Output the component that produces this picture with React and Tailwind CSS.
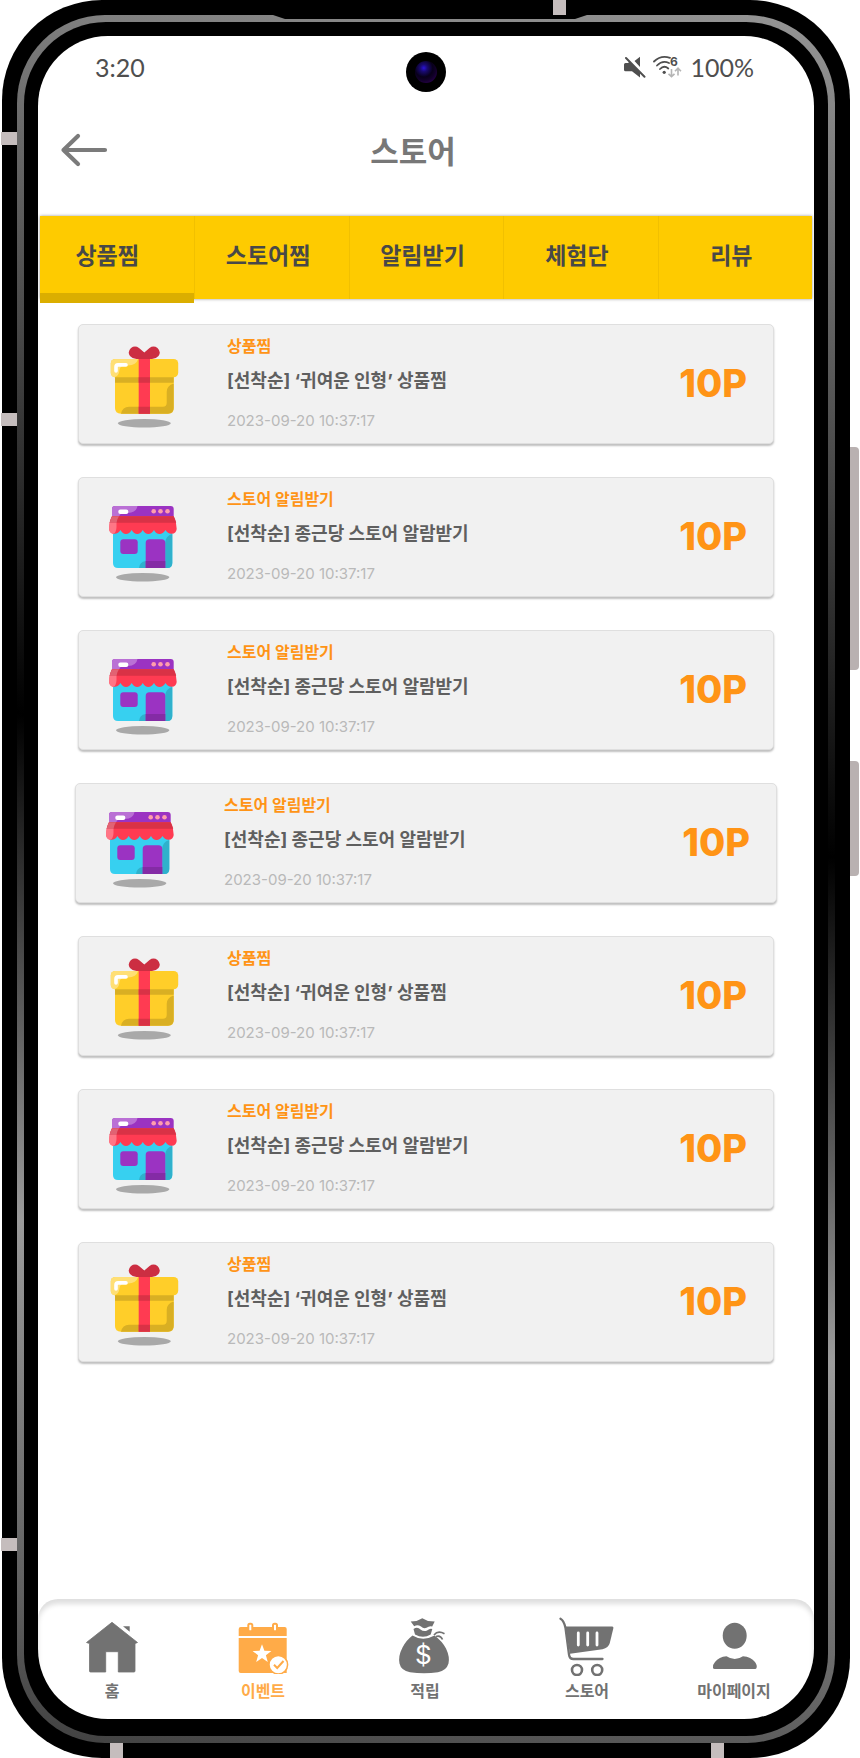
import React from "react";

const KR = "font-['Noto_Sans_CJK_KR',sans-serif]";

const TABS = ["상품찜", "스토어찜", "알림받기", "체험단", "리뷰"];

const GIFT = { kind: "gift", tag: "상품찜", title: "[선착순] ‘귀여운 인형’ 상품찜" };
const STORE = { kind: "store", tag: "스토어 알림받기", title: "[선착순] 종근당 스토어 알람받기" };

const ITEMS = [
  { id: 1, ...GIFT },
  { id: 2, ...STORE },
  { id: 3, ...STORE },
  { id: 4, ...STORE, wide: true },
  { id: 5, ...GIFT },
  { id: 6, ...STORE },
  { id: 7, ...GIFT },
];

function GiftIcon() {
  return (
    <svg viewBox="0 0 70 84" className="h-[84px] w-[70px]" aria-hidden="true">
      <ellipse cx="35.3" cy="77.3" rx="26.5" ry="4.3" fill="#a9a9a9" />
      <path d="M6 28H64.700V62Q64.700 67.700 59 67.700H12Q6 67.700 6 62Z" fill="#ffce29" />
      <path
        d="M6 31H64.700V36.700H6ZM64.700 37.500Q57.700 39.500 57.700 46V57Q57.700 60.700 54 60.700H20Q13.500 60.700 12 67.700H59Q64.700 67.700 64.700 62Z"
        fill="#d9af23"
      />
      <rect x="1.800" y="13" width="67.400" height="18.300" rx="4.500" fill="#ffce29" />
      <path d="M6.300 13H29Q27.500 19 19 19.500H15Q11 20 10.500 24Q10 30 5.500 31.300Q1.800 30.500 1.800 27V17.500Q1.800 13 6.300 13Z" fill="#ffdf75" />
      <path d="M7 25V21Q7 18.900 9 18.900H17" fill="none" stroke="#fff" strokeWidth="3.600" strokeLinecap="round" />
      <rect x="29.700" y="13" width="11.300" height="54.700" fill="#ff3b52" />
      <path d="M29.700 31.300H41V36.700H29.700ZM29.700 60.700H41V67.700H29.700Z" fill="#d93246" />
      <path
        d="M35.300 6.500L40.500 2Q44.500-.8 48.500 2Q52.500 6 49.500 10Q47.500 12.300 43 13H27.500Q23 12.300 21 10Q18 6 22 2Q26-.8 30 2Z"
        fill="#cc2e42"
      />
    </svg>
  );
}

function StoreIcon() {
  return (
    <svg viewBox="0 0 70 84" className="h-[84px] w-[70px]" aria-hidden="true">
      <ellipse cx="33.700" cy="78.300" rx="26.700" ry="4.300" fill="#a9a9a9" />
      <path d="M4 28H63.300V64Q63.300 69 58.300 69H9Q4 69 4 64Z" fill="#37d0f0" />
      <path d="M63.300 35Q56.300 37 56.300 44V69H58.300Q63.300 69 63.300 64ZM36.700 62Q30.500 63 30 69H37Z" fill="#2fb1cc" />
      <rect x="11.300" y="40.300" width="17.400" height="14.700" rx="3" fill="#9b33c2" />
      <path d="M36.700 69V44Q36.700 40.300 40.500 40.300H52.500Q56.300 40.300 56.300 44V69Z" fill="#9b33c2" />
      <path d="M36.700 62H56.300V69H36.700Z" fill="#842ba5" />
      <path d="M3 18V10Q3 7 6 7H61.700Q64.700 7 64.700 10V18Z" fill="#9b33c2" />
      <path d="M3 18V10Q3 7 6 7H28.500Q27.500 13.500 19 14H15Q11 14 10 18Z" fill="#ba70d5" />
      <rect x="9.300" y="10.500" width="10" height="4.500" rx="2" fill="#fff" />
      <circle cx="44.700" cy="12.300" r="2.300" fill="#ff9dab" />
      <circle cx="51.500" cy="12.300" r="2.300" fill="#ff9dab" />
      <circle cx="58.500" cy="12.300" r="2.300" fill="#ff9dab" />
      <path
        d="M3 17.300H64.700Q67.700 23 67.700 30Q67 35 62.500 34.800Q58.500 34.500 56.500 31Q54 35 50.500 35Q47 35 45 31Q42.500 35 39.300 35Q36 35 33.800 31Q31.500 35 28.200 35Q25 35 22.700 31Q20.300 35 17 35Q13.700 35 11.500 31Q9.500 34.500 5.500 34.800Q1 35 0 30Q0 23 3 17.300Z"
        fill="#ff3b52"
      />
      <path d="M3 17.300H64.700Q66.500 20.500 67.200 23.700H.6Q1.300 20.500 3 17.300Z" fill="#d93246" />
      <path d="M3 17.300H10Q7.800 20.500 7.500 23.700H.6Q1.300 20.500 3 17.300Z" fill="#e16373" />
      <path d="M.6 23.700H7.500V28Q7.300 33.500 4.500 34.800Q.5 34.500 0 30Q0 26.500 .6 23.700Z" fill="#ff7686" />
    </svg>
  );
}

function RewardCard({ item }) {
  return (
    <li
      className={
        "flex min-h-[120px] rounded-[5px] border border-[#dfdfdf] bg-[#f1f1f1] pr-[26px] pl-[30px] font-[Inter,'Noto_Sans_CJK_KR',sans-serif] shadow-[0_2px_2px_rgba(0,0,0,0.25)] " +
        (item.wide ? "-mx-[3px]" : "")
      }
    >
      <div className="shrink-0 pt-[21px]">{item.kind === "gift" ? <GiftIcon /> : <StoreIcon />}</div>
      <div className="flex flex-1 flex-col pt-[9px] pl-12">
        <p className="text-base/6 font-bold text-[#ff9416]">{item.tag}</p>
        <h2 className="mt-[7px] text-lg/8 font-bold text-[#5f5f5f]">{item.title}</h2>
        <time className="mt-3 text-[15px]/6 text-[#b9b9b9]">2023-09-20 10:37:17</time>
      </div>
      <strong className="self-center pb-0.5 text-[38px]/10 font-extrabold text-[#ff9416]">10P</strong>
    </li>
  );
}

function MuteIcon() {
  return (
    <svg viewBox="0 0 22 22" className="size-[22px]" fill="#4f4f4f" aria-hidden="true">
      <path d="M10.500 5L16 .8V11ZM0 8.500Q0 7 1.500 7H4L5.500 5.800L16 16.500V21.500L8 15.300H1.500Q0 15.300 0 13.800Z" />
      <path d="M2 2L20.500 20.700" stroke="#4f4f4f" strokeWidth="2" strokeLinecap="round" />
    </svg>
  );
}

function WifiIcon() {
  return (
    <svg viewBox="0 0 30 24" className="h-6 w-[30px]" aria-hidden="true">
      <g fill="none" stroke="#4f4f4f" strokeWidth="1.800" strokeLinecap="round">
        <path d="M1 6.500Q8-.3 17 2.800" />
        <path d="M4 10.500Q9.500 4.800 16 8" />
        <path d="M7 14Q11 9.800 15.300 13.500" />
      </g>
      <circle cx="11.200" cy="17.300" r="1.600" fill="#4f4f4f" />
      <text x="17" y="11" className="font-[Inter,sans-serif] text-[12px] font-bold" fill="#4f4f4f">6</text>
      <g fill="none" stroke="#b5b5b5" strokeWidth="1.600">
        <path d="M18.500 14V21.500M15.500 18.800L18.500 21.700L21.500 18.800" />
        <path d="M25 20.500V13.500M22 16.200L25 13.200L28 16.200" />
      </g>
    </svg>
  );
}

function HomeIcon() {
  return (
    <svg viewBox="0 0 54 58" className="h-[58px] w-[54px]" fill="#727272" aria-hidden="true">
      <path d="M27 6.300L52.500 26.500L50 27.500V55Q50 56 49 56H33.300V35.700H20.700V56H5.500Q4.500 56 4.500 55V27.500L1.500 26.500Z" stroke="#727272" strokeWidth=".8" strokeLinejoin="round" />
      <path d="M38 10.300H44.700V15.800Z" />
    </svg>
  );
}

function EventIcon() {
  return (
    <svg viewBox="0 0 54 58" className="h-[58px] w-[54px]" fill="#ffab48" aria-hidden="true">
      <path d="M2.700 20V13Q2.700 11 4.700 11H48.700Q50.700 11 50.700 13V20ZM2.700 22H50.700V57H4.700Q2.700 57 2.700 55Z" />
      <rect x="12.300" y="7.700" width="4" height="7.500" rx="1.500" fill="#fff" stroke="#ffab48" strokeWidth="2" />
      <rect x="37" y="7.700" width="4" height="7.500" rx="1.500" fill="#fff" stroke="#ffab48" strokeWidth="2" />
      <path d="M26 28.300L28.400 34.800L35.400 35L29.900 39.300L31.800 46L26 42.100L20.200 46L22.100 39.300L16.600 35L23.600 34.800Z" fill="#fff" />
      <circle cx="42.300" cy="48.700" r="9.300" fill="#fff" stroke="#ffab48" strokeWidth="1.500" />
      <path d="M38 48.700L41.200 52L47.500 45" fill="none" stroke="#ffab48" strokeWidth="2" />
    </svg>
  );
}

function BagIcon() {
  return (
    <svg viewBox="0 0 54 58" className="h-[58px] w-[54px]" fill="#727272" aria-hidden="true">
      <path d="M14.500 19.500Q25 26 36.500 19.500Q44 25 48 32.500Q52 41 50.500 47.500Q48.500 54.500 40 56.300Q26 58 12 56.300Q3 54.500 1.500 47.500Q0 40 4.500 31.500Q8 24.500 14.500 19.500Z" />
      <path d="M12.700 5.500L18.500 5L24.300 2.300L30 5L36.700 5.500L34.200 10.500Q31.500 9.500 28.500 11.800Q25.500 13 23 10.500Q19.500 8 16.200 10.200Z" />
      <path d="M15.500 13Q19.500 10.500 22.500 13.500Q26 16.200 29.500 14.200Q32 12 34.300 13L32.700 18.500Q25 23 17 18.500Z" />
      <path d="M36 19Q40 14 46.500 17.800M38 20.500Q42.500 19 44.500 23.500" fill="none" stroke="#727272" strokeWidth="1.700" />
      <text x="25.300" y="48" textAnchor="middle" className="font-[Inter,sans-serif] text-[26px]" fill="#fff">$</text>
    </svg>
  );
}

function CartIcon() {
  return (
    <svg viewBox="0 0 56 60" className="-mb-0.5 h-[60px] w-[56px]" fill="#727272" aria-hidden="true">
      <path d="M6 10.500H53.300Q54.600 10.500 54.400 12L50.800 27Q49.500 32 43.500 33.200L11 37.700Z" />
      <path d="M1.500 2.700Q5 4.500 6.500 12L10 38.500Q10.500 43 14.500 43H43.500" fill="none" stroke="#727272" strokeWidth="2.300" strokeLinecap="round" />
      <path d="M19.300 17V29M28.700 17V29M38 17V29" stroke="#fff" strokeWidth="2.800" strokeLinecap="round" />
      <circle cx="18" cy="54" r="5" fill="none" stroke="#727272" strokeWidth="2.600" />
      <circle cx="38.200" cy="54" r="5" fill="none" stroke="#727272" strokeWidth="2.600" />
    </svg>
  );
}

function UserIcon() {
  return (
    <svg viewBox="0 0 54 58" className="h-[58px] w-[54px]" fill="#727272" aria-hidden="true">
      <ellipse cx="27.700" cy="19.700" rx="12" ry="13" />
      <path d="M19.500 40.300Q23.500 43 27.800 43Q32 43 36 40.300Q44 41 48 46Q50.500 49.500 49.500 52Q49.300 53 48 53H7.700Q6.300 53 6 52Q5.200 49 8 46Q12 41 19.500 40.300Z" />
    </svg>
  );
}

const NAV = [
  { label: "홈", Icon: HomeIcon },
  { label: "이벤트", Icon: EventIcon, active: true },
  { label: "적립", Icon: BagIcon },
  { label: "스토어", Icon: CartIcon },
  { label: "마이페이지", Icon: UserIcon },
];

function FrameDetails() {
  return (
    <div aria-hidden="true">
      <div className="absolute top-[15px] right-[263px] left-[271px] h-1 bg-black [clip-path:polygon(0_0,100%_0,calc(100%-12px)_100%,12px_100%)]" />
      <div className="absolute top-0 right-[284px] h-[15px] w-[13px] bg-[#c5bdbd]" />
      <div className="absolute top-[132px] -left-px h-[13px] w-4 bg-[#c5bdbd]" />
      <div className="absolute top-[413px] -left-px h-[13px] w-4 bg-[#c5bdbd]" />
      <div className="absolute bottom-[207px] -left-px h-[13px] w-4 bg-[#c5bdbd]" />
      <div className="absolute bottom-0 left-[108px] h-[15px] w-[13px] bg-[#c5bdbd]" />
      <div className="absolute right-[126px] bottom-0 h-[15px] w-[13px] bg-[#c5bdbd]" />
      <div className="absolute top-[447px] left-full h-[223px] w-[9px] rounded-r-[4px] bg-[#b9b1b1]" />
      <div className="absolute top-[761px] left-full h-[115px] w-[9px] rounded-r-[4px] bg-[#b9b1b1]" />
    </div>
  );
}

export default function App() {
  return (
    <div className={`flex min-h-screen bg-white pr-2.5 pl-0.5 ${KR}`}>
      <div className="relative flex flex-1 rounded-[100px] bg-black p-[15px]">
        <div className="flex flex-1 rounded-[88px] bg-[linear-gradient(190deg,#969696_0%,#4a4a4a_24%,#000_45%,#9c9c9c_72%,#606060_92%,#404040_100%)] p-[7px]">
          <div className="flex flex-1 rounded-[82px] bg-black px-3.5 pt-3.5 pb-[17px]">
            <div className="relative flex flex-1 flex-col overflow-hidden rounded-[70px] bg-white">
              <div className="absolute top-4 left-1/2 flex size-10 -translate-x-1/2 items-center justify-center rounded-full bg-black">
                <span className="size-[22px] rounded-full bg-[radial-gradient(circle_at_40%_32%,#2a12d8_0%,#190a70_18%,#08001a_45%,#12002a_62%,#3a0068_100%)]" />
              </div>

              <div className="flex h-[62px] items-center justify-between pr-[60px] pl-[57px] font-[Lato,sans-serif] text-[25px]/8 text-[#4f4f4f]">
                <span>3:20</span>
                <span className="flex items-center gap-[7px]">
                  <MuteIcon />
                  <WifiIcon />
                  <span>100%</span>
                </span>
              </div>

              <header className="flex h-[118px] items-center pr-24 pb-[14px] pl-[22px]">
                <button type="button" aria-label="뒤로" className="h-12 w-12">
                  <svg viewBox="0 0 48 36" className="h-9 w-12" fill="none" stroke="#7b7b7b" strokeWidth="4.200" strokeLinecap="round" strokeLinejoin="round">
                    <path d="M18 4L3.500 18L18 32M3.500 18H45" />
                  </svg>
                </button>
                <h1 className="flex-1 text-center text-[31px]/10 font-bold text-[#777]">스토어</h1>
              </header>

              <div role="tablist" className="mx-0.5 grid h-[83px] shrink-0 grid-cols-5 bg-[#fecb00] shadow-[0_0_3px_rgba(0,0,0,0.4)]">
                {TABS.map((tab, i) => (
                  <button
                    key={tab}
                    type="button"
                    role="tab"
                    aria-selected={i === 0}
                    className={
                      "relative pb-2 text-[23px]/8 font-bold text-[#484848] " +
                      (i === 0
                        ? "pr-5 after:absolute after:inset-x-0 after:-bottom-1 after:h-[10px] after:bg-[#dbae00]"
                        : "border-l border-[#f1c000] pr-2")
                    }
                  >
                    {tab}
                  </button>
                ))}
              </div>

              <main className="px-10 pt-[25px] pb-10">
                <ul className="flex flex-col gap-[33px]">
                  {ITEMS.map((item) => (
                    <RewardCard key={item.id} item={item} />
                  ))}
                </ul>
              </main>

              <nav className="mt-auto grid grid-cols-[148fr_154fr_170fr_154fr_140fr] rounded-t-[20px] pt-[17px] pr-2.5 pb-[17px] shadow-[inset_0_5px_5px_rgba(0,0,0,0.13)]">
                {NAV.map(({ label, Icon, active }) => (
                  <a key={label} href="#" className="flex flex-col items-center">
                    <Icon />
                    <span className={"mt-1 text-base/6 font-bold whitespace-nowrap " + (active ? "text-[#ffab48]" : "text-[#727272]")}>{label}</span>
                  </a>
                ))}
              </nav>
            </div>
          </div>
        </div>
        <FrameDetails />
      </div>
    </div>
  );
}
